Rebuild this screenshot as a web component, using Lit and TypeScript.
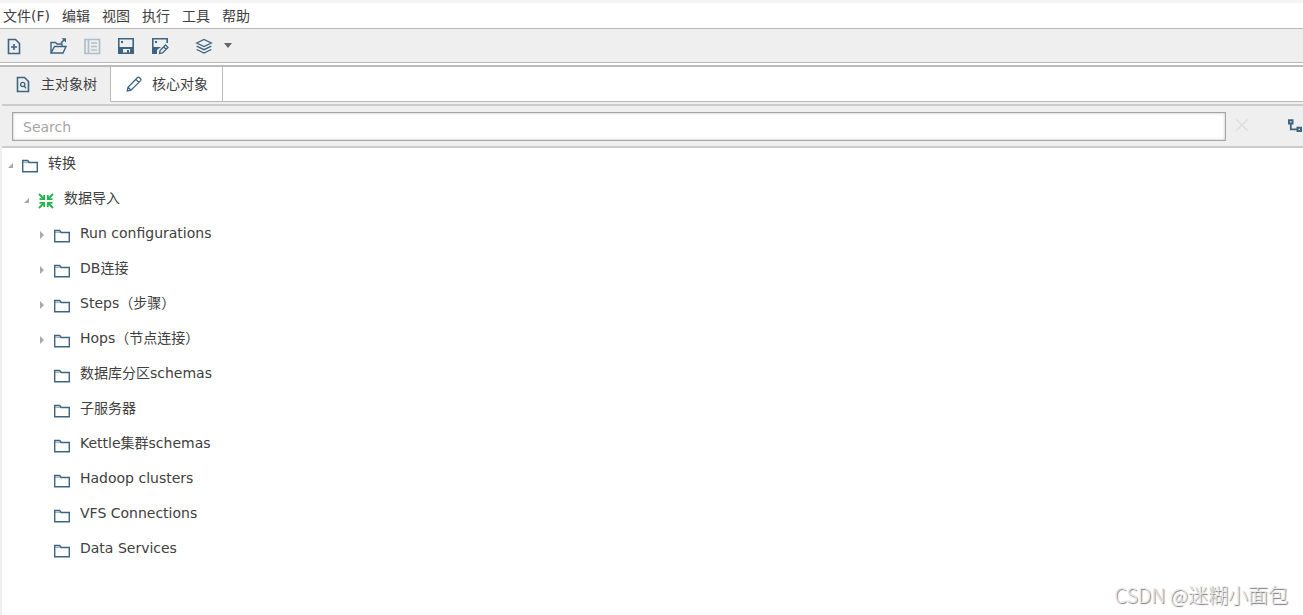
import { LitElement, html, css, svg, nothing } from "lit";
import { customElement, property, state } from "lit/decorators.js";

const icons: Record<string, unknown> = {
  newFile: svg`<path d="M3 1.5H9.5L13.5 5.5V15.5H2.5V1.5Z" stroke-width="1.6"/><path d="M8 6V12M5 9H11" stroke-width="1.6"/>`,
  open: svg`<path d="M1 15V4.5H5.5L7 6H12V8.5M1 15L4.5 8.5H16L13 15Z" stroke-width="1.4"/><path d="M11 5L14.5 1.5" stroke-width="1.6"/><path d="M11.5 .2H16V4.5Z" class="fill"/>`,
  explorer: svg`<path d="M1 1.5H15.5V15.5H1ZM4.5 1.5V15.5M7 5H13M7 8.5H13M7 12H13" stroke-width="1.7"/>`,
  save: svg`<path d="M.8 .8H15.2V15.2H.8Z" stroke-width="1.6"/><path d="M1 9H15V15H12V11H5V15H1ZM3 3H5V5H3ZM9 12H11V15H9Z" class="fill"/>`,
  saveAs: svg`<path d="M5 15.2H.8V.8H15.2V5" stroke-width="1.6"/><path d="M1 9H9L5 12V15H1ZM3 3H5V5H3Z" class="fill"/><path d="M7.5 15.5L8 12.5L13.5 7L16 9.5L10.5 15ZM11.8 9L14 11.2" stroke-width="1.3"/>`,
  layers: svg`<path d="M0.7 5L8 1.5L15.3 5L8 8.5Z" stroke-width="1.3"/><path d="M.7 8.2L8 11.7L15.3 8.2M.7 11.5L8 15L15.3 11.5" stroke-width="1.3"/>`,
  fileSearch: svg`<path d="M3 1.5H9.5L13.5 5.5V15.5H2.5V1.5Z" stroke-width="1.6"/><circle cx="7.7" cy="8.5" r="2.1" stroke-width="1.3"/><path d="M9.2 10L11 12.3" stroke-width="1.3"/>`,
  pencil: svg`<path d="M1.2 15L2 11.3L11.6 1.5Q12.5 .8 13.5 1.7L14.6 2.8Q15.4 3.7 14.6 4.6L5 14.2ZM9.8 3.4L12.8 6.4M2 11.3L5 14.2" stroke-width="1.3"/>`,
  folder: svg`<path d="M.7 3.5V14.8H15.3V5.5H7.2L5.7 3.5Z" stroke-width="1.4"/><path d="M1 5.3H7" stroke-width=".6"/>`,
  transform: svg`<g class="green"><path d="M1 2L6 7M15 2L10 7M1 16L6 11M15 16L10 11" stroke-width="1.8"/><path d="M1.5 7.2H6.2V3M14.5 7.2H9.8V3M1.5 10.8H6.2V15M14.5 10.8H9.8V15" stroke-width="1.8"/></g>`,
  clear: svg`<path d="M1.5 1.5L14.5 14.5M14.5 1.5L1.5 14.5" stroke-width="2"/>`,
  nodes: svg`<path d="M2 2.2H5.5V5.5H2ZM10.5 9.7H14V13H10.5Z" stroke-width="2"/><path d="M3.8 6V11.4H10" stroke-width="1.8"/>`,
};

@customElement("ui-icon")
class UiIcon extends LitElement {
  @property() name = "";
  static styles = css`
    :host { display: block; flex: none; width: 16px; height: 16px; color: #3d6480; }
    svg { display: block; width: 100%; height: 100%; overflow: visible; fill: none; stroke: currentColor; }
    .fill { fill: currentColor; stroke: none; }
    .green { stroke: #22b14c; }
  `;
  render() {
    return html`<svg viewBox="0 0 16 16" aria-hidden="true">${icons[this.name]}</svg>`;
  }
}

interface TreeNode {
  label: string;
  icon?: string;
  expandable?: boolean;
  children?: TreeNode[];
}

const tree: TreeNode[] = [
  {
    label: "转换",
    children: [
      {
        label: "数据导入",
        icon: "transform",
        children: [
          { label: "Run configurations", expandable: true },
          { label: "DB连接", expandable: true },
          { label: "Steps（步骤）", expandable: true },
          { label: "Hops（节点连接）", expandable: true },
          { label: "数据库分区schemas" },
          { label: "子服务器" },
          { label: "Kettle集群schemas" },
          { label: "Hadoop clusters" },
          { label: "VFS Connections" },
          { label: "Data Services" },
        ],
      },
    ],
  },
];

@customElement("object-tree")
class ObjectTree extends LitElement {
  @state() private closed = new Set<string>();

  static styles = css`
    :host { display: block; }
    ul { list-style: none; margin: 0; padding: 0; }
    ul ul { padding-left: 16px; }
    .row { display: flex; align-items: center; box-sizing: border-box; height: 35px; padding-bottom: 2px; }
    .toggle { width: 16px; height: 16px; flex: none; margin-right: 4px; padding: 0; border: 0; background: none; display: grid; place-items: center; }
    .toggle svg { display: block; width: 6px; height: 8px; fill: #a9a9a9; }
    .label { padding: 0 0 4px 10px; line-height: 20px; white-space: nowrap; }
  `;

  private toggle(label: string) {
    const next = new Set(this.closed);
    next.has(label) ? next.delete(label) : next.add(label);
    this.closed = next;
  }

  private node(n: TreeNode): unknown {
    const open = !!n.children && !this.closed.has(n.label);
    return html`<li role="treeitem">
      <div class="row">
        ${n.children || n.expandable
          ? html`<button class="toggle" aria-label=${n.label} aria-expanded=${open} @click=${() => this.toggle(n.label)}>
              <svg viewBox="0 0 6 8"><path d=${open ? "M6 2V7H1Z" : "M1 0L5 4L1 8Z"} /></svg>
            </button>`
          : html`<span class="toggle"></span>`}
        <ui-icon name=${n.icon ?? "folder"}></ui-icon>
        <span class="label">${n.label}</span>
      </div>
      ${open ? html`<ul role="group">${n.children!.map((c) => this.node(c))}</ul>` : nothing}
    </li>`;
  }

  render() {
    return html`<ul role="tree">${tree.map((n) => this.node(n))}</ul>`;
  }
}

@customElement("app-root")
class AppRoot extends LitElement {
  @state() private tab = 0;

  static styles = css`
    :host {
      display: flex; flex-direction: column; box-sizing: border-box; min-height: 100vh;
      overflow: hidden; background: #fff; color: #404040;
      font: 14px/20px "DejaVu Sans", "Noto Sans CJK SC", sans-serif;
    }
    button { font: inherit; color: inherit; border: 0; padding: 0; background: none; }
    .menu { display: flex; gap: 12px; padding: 3px 3px 2px; border-top: 3px solid #f4f4f4; border-bottom: 1px solid #b9b9b9; }
    .toolbar { display: flex; align-items: center; height: 33px; padding: 0 6px; gap: 18px; background: #efefef; border-bottom: 1px solid #b9b9b9; }
    .gap { margin-left: 10px; }
    .faded { opacity: 0.35; }
    .drop { display: flex; align-items: center; gap: 12px; }
    .arrow { border: 4px solid transparent; border-top: 5px solid #666; border-bottom: 0; }
    .tabs { display: flex; margin-top: 2px; border-top: 2px solid #bbb; }
    .tab { display: flex; align-items: center; gap: 10px; height: 35px; padding: 0 14px 0 15px; border-right: 1px solid #b9b9b9; border-bottom: 1px solid #b9b9b9; }
    .tab.active { padding-right: 13px; background: #efefef; border-bottom-color: #efefef; }
    .rest { flex: 1; border-bottom: 1px solid #b9b9b9; }
    .panel { flex: 1; display: flex; flex-direction: column; padding: 2px 0 0 2px; background: #efefef; }
    .search { display: flex; align-items: center; height: 40px; padding-left: 10px; border-top: 2px solid #ccc; border-bottom: 2px solid #ccc; }
    .box { flex: 1; min-width: 0; box-sizing: border-box; height: 29px; margin: 0; padding: 1px 10px 0; border: 1px solid #a5a5a5; border-radius: 0; background: #fff; box-shadow: inset 0 0 3px #bbb; font: inherit; color: inherit; outline: 0; }
    .box::placeholder { color: #a5a5a5; opacity: 1; }
    .clear { margin: 0 38px 2px 9px; }
    .clear ui-icon { width: 14px; height: 14px; color: #e0e0e0; }
    .content { flex: 1; background: #fff; }
    .mark { position: absolute; right: 15px; bottom: 6px; font: 20px/28px "Noto Sans CJK SC", sans-serif; font-weight: 300; color: #e8e8e8; text-shadow: 1px 1px 1px #777; }
  `;

  render() {
    const tool = (icon: string, label: string, cls = "") =>
      html`<button class=${cls} aria-label=${label}><ui-icon name=${icon}></ui-icon></button>`;
    const tabs = [["fileSearch", "主对象树"], ["pencil", "核心对象"]];
    return html`
      <nav class="menu">
        ${["文件(F)", "编辑", "视图", "执行", "工具", "帮助"].map((m) => html`<button>${m}</button>`)}
      </nav>
      <div class="toolbar" role="toolbar">
        ${tool("newFile", "New")} ${tool("open", "Open", "gap")} ${tool("explorer", "Explorer", "faded")}
        ${tool("save", "Save")} ${tool("saveAs", "Save as")}
        <button class="drop gap" aria-label="Perspective"><ui-icon name="layers"></ui-icon><span class="arrow"></span></button>
      </div>
      <div class="tabs" role="tablist">
        ${tabs.map(([icon, label], i) => html`<button role="tab" class="tab ${this.tab === i ? "active" : ""}"
          aria-selected=${this.tab === i} @click=${() => (this.tab = i)}><ui-icon name=${icon}></ui-icon>${label}</button>`)}
        <div class="rest"></div>
      </div>
      <main class="panel">
        <div class="search">
          <input class="box" type="text" placeholder="Search" aria-label="Search" />
          ${tool("clear", "Clear", "clear")} ${tool("nodes", "Expand all")}
        </div>
        <div class="content"><object-tree></object-tree></div>
      </main>
      <div class="mark">CSDN @迷糊小面包</div>
    `;
  }
}
